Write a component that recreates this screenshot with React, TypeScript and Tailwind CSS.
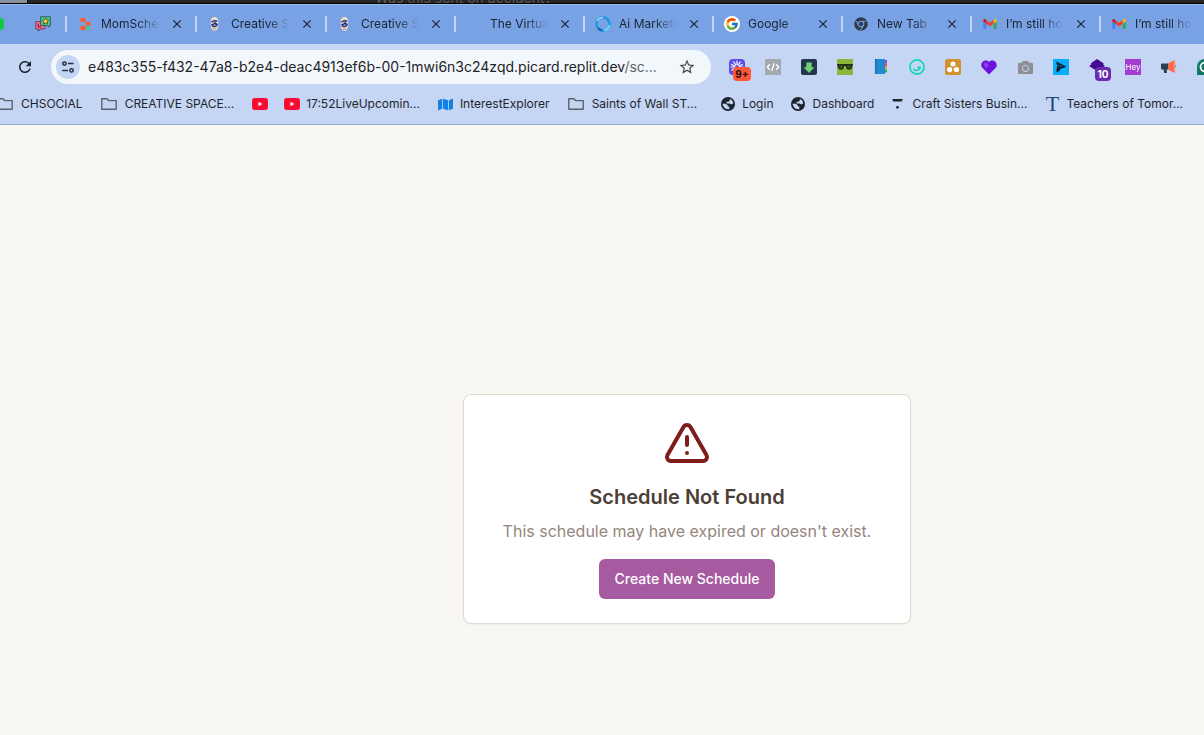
import type { ReactNode } from "react";
import { AlertTriangle } from "lucide-react";
import { FcGoogle } from "react-icons/fc";
import { FaCamera, FaChrome, FaMap } from "react-icons/fa";
import { MdClose, MdRefresh, MdStarBorder } from "react-icons/md";

function PinnedChatIcon() {
  return (
    <svg viewBox="0 0 16 16" className="size-4" aria-hidden="true">
      <path d="M.8 5.600h9v7.400H5L3.200 15.200V13H.8z" fill="#ff6b95" stroke="#5a3350" strokeWidth=".8" />
      <path d="M3.300 7.500v3.300h3" fill="none" stroke="#7c2148" strokeWidth="1.200" />
      <path d="M5.600.8h9.800v8.600h-1.200v1.800L12 9.400H5.600z" fill="#4fc98a" stroke="#26454a" strokeWidth=".8" />
      <path d="M10.500 2l1.100 1.900 2 .4-1.400 1.500.3 2.100-2-.9-2 .9.300-2.100-1.400-1.500 2-.4z" fill="#ffd52e" stroke="#33503a" strokeWidth=".8" />
    </svg>
  );
}

function ReplitIcon() {
  return (
    <svg viewBox="0 0 16 16" className="size-4" aria-hidden="true">
      <rect x="3.500" y="2" width="5" height="4" rx=".8" fill="#ff5a2b" />
      <rect x="8.500" y="6" width="5" height="3.600" rx=".8" fill="#ff5a2b" />
      <rect x="3.500" y="10" width="5" height="4" rx=".8" fill="#ff5a2b" />
      <circle cx="10.800" cy="11.800" r="1.900" fill="#37cf7a" />
    </svg>
  );
}

function MascotIcon() {
  return (
    <svg viewBox="0 0 16 16" className="size-4" aria-hidden="true">
      <ellipse cx="7.500" cy="8" rx="3.900" ry="7" fill="#e6d5d0" />
      <path d="M4 4.500Q7.500-1 11 4.300" fill="none" stroke="#f3dfc6" strokeWidth="1.400" />
      <path d="M4.600 6.200Q7 3.800 10.200 5.200M5 8.800Q8.500 6.800 10.200 8.400Q9.500 11 6 10.300z" fill="none" stroke="#20327d" strokeWidth="1.500" />
      <circle cx="8" cy="7" r="1" fill="#20327d" />
      <path d="M6 13h3" stroke="#c99484" strokeWidth="1" />
    </svg>
  );
}

function RingIcon() {
  return (
    <svg viewBox="0 0 16 16" className="size-4" fill="none" aria-hidden="true">
      <circle cx="8" cy="8" r="6.600" stroke="#2597e2" strokeWidth="2.600" />
      <path d="M2.200 5A6.500 6.500 0 0 1 8 1.500" stroke="#a5dcf5" strokeWidth="1.600" />
      <path d="M14.400 9A6.500 6.500 0 0 1 9 14.400" stroke="#64d6f2" strokeWidth="2.200" />
      <path d="M3 12.200A6.500 6.500 0 0 0 7 14.400" stroke="#1666b8" strokeWidth="2.200" />
    </svg>
  );
}

function GoogleIcon() {
  return (
    <span className="flex size-4 items-center justify-center rounded-full bg-white">
      <FcGoogle className="size-3.5" />
    </span>
  );
}

function GmailIcon() {
  return (
    <svg viewBox="52 42 88 66" className="h-3 w-4 p-px" aria-hidden="true">
      <path fill="#4285f4" d="M58 108h14V74L52 59v43c0 3.320 2.690 6 6 6" />
      <path fill="#34a853" d="M120 108h14c3.320 0 6-2.690 6-6V59l-20 15" />
      <path fill="#fbbc04" d="M120 48v26l20-15v-8c0-7.420-8.470-11.650-14.400-7.200" />
      <path fill="#ea4335" d="M72 74V48l24 18 24-18v26L96 92" />
      <path fill="#c5221f" d="M52 51v8l20 15V48l-5.600-4.200c-5.940-4.450-14.400-.22-14.400 7.200" />
    </svg>
  );
}

type Tab = { title: string; icon: ReactNode; wide?: boolean };

const tabs: Tab[] = [
  { title: "MomSchedule", icon: <ReplitIcon />, wide: true },
  { title: "Creative Space", icon: <MascotIcon />, wide: true },
  { title: "Creative Space", icon: <MascotIcon /> },
  { title: "The Virtual", icon: null },
  { title: "Ai Marketing", icon: <RingIcon /> },
  { title: "Google", icon: <GoogleIcon /> },
  { title: "New Tab", icon: <FaChrome className="size-3.5 text-[#323b4b]" /> },
  { title: "I’m still hoping", icon: <GmailIcon /> },
  { title: "I’m still hoping", icon: <GmailIcon /> },
];

function TabStrip() {
  return (
    <nav aria-label="Tabs" className="flex h-10 items-center overflow-hidden border-t border-[#9dbcee] bg-[#78a2e4] pb-px">
      <div className="flex w-[65px] shrink-0 items-center justify-between pr-3.5">
        <span className="h-3 w-1 rounded-r-full bg-[#0bca41]" />
        <PinnedChatIcon />
      </div>
      {tabs.map((tab, i) => (
        <div key={i} className={`flex h-4 shrink-0 items-center border-l-2 border-[#c4d6f4] pr-2.5 pl-2.5 ${tab.wide ? "w-[130px]" : "w-[129px]"}`}>
          <span className="flex size-4 shrink-0 items-center justify-center">{tab.icon}</span>
          <a href="#tab" className="mr-2 ml-2 min-w-0 flex-1 overflow-hidden [mask-image:linear-gradient(to_right,black_60%,transparent_98%)] text-xs whitespace-nowrap text-[#1b2230]">
            {tab.title}
          </a>
          <button aria-label={`Close ${tab.title}`} className="flex size-4 shrink-0 items-center justify-center text-[#1b2230]">
            <MdClose className="size-3.5" />
          </button>
        </div>
      ))}
    </nav>
  );
}

function Badge({ className, children }: { className: string; children: ReactNode }) {
  return (
    <span className={`absolute flex h-3.5 items-center justify-center rounded text-[10px] leading-none font-bold ${className}`}>
      {children}
    </span>
  );
}

const svgBox = { viewBox: "0 0 16 16", className: "size-4", "aria-hidden": true } as const;

const extensions: { name: string; icon: ReactNode }[] = [
  {
    name: "Loom",
    icon: (
      <>
        <svg {...svgBox}>
          <rect width="16" height="16" rx="4" fill="#5b4fe8" />
          <path d="M8 8V2M8 8L4.800 3M8 8l3.200-5M8 8L2.600 5.500M8 8l5.400-2.500M8 8H2M8 8h6M8 8l-5 3" stroke="#fff" strokeWidth="1.200" strokeLinecap="round" />
          <circle cx="8" cy="8" r="2" fill="#5b4fe8" />
        </svg>
        <Badge className="top-2 left-1 w-[18px] bg-[#ff5638] text-[#26120e]">9+</Badge>
      </>
    ),
  },
  {
    name: "Source viewer",
    icon: (
      <svg {...svgBox}>
        <rect width="16" height="16" fill="#a5a9af" />
        <path d="M4.800 5.200L2.300 8l2.500 2.800M11.200 5.200L13.700 8l-2.500 2.800M9.200 4.200L6.800 11.800" fill="none" stroke="#fff" strokeWidth="1.300" />
      </svg>
    ),
  },
  {
    name: "Downloader",
    icon: (
      <svg {...svgBox}>
        <rect width="16" height="16" rx="2" fill="#24344a" />
        <path d="M5.300 3.500h5.400v4.700h2.800L8 14 2.500 8.200h2.800z" fill="#6fd071" />
      </svg>
    ),
  },
  {
    name: "Glasses",
    icon: (
      <svg {...svgBox}>
        <rect width="16" height="16" fill="#8ab83c" />
        <path d="M0 5h16v1.200h-.6c-.2 3-1.200 4.600-3.400 4.600-2.200 0-3-1.600-3.300-3.800H7.300C7 9.200 6.200 10.800 4 10.800 1.800 10.800.8 9.200.6 6.200H0z" fill="#222c18" />
        <path d="M2 6.500h4.200c-.1 1.800-.8 2.900-2.100 2.900S2.100 8.300 2 6.500zM9.800 6.500H14c-.1 1.800-.8 2.900-2.100 2.900s-2-1.100-2.100-2.900z" fill="#3f5526" />
      </svg>
    ),
  },
  {
    name: "Notebook",
    icon: (
      <svg {...svgBox}>
        <path d="M2 0h10v15H2z" fill="#208bd5" />
        <path d="M2 0h1.500v15H2z" fill="#176bad" />
        <path d="M1.200 3H3M1.200 5.500H3M1.200 8H3M1.200 10.500H3M1.200 13H3" stroke="#6d9fc8" strokeWidth=".6" />
        <path d="M12 1h2v3.500h-2z" fill="#a646b5" />
        <path d="M12 4.500h2v3h-2z" fill="#e74b3c" />
        <path d="M12 7.500h2v3h-2z" fill="#f39c25" />
        <path d="M12 10.500h2v3h-2z" fill="#29b66c" />
      </svg>
    ),
  },
  {
    name: "Smile",
    icon: (
      <svg {...svgBox} fill="none">
        <circle cx="8" cy="8" r="7.100" stroke="#10d6b4" strokeWidth="1.700" />
        <path d="M4.500 10c1.500 2.300 6 2 7-2.500M8.500 8.200h3" stroke="#10d6b4" strokeWidth="1.500" />
      </svg>
    ),
  },
  {
    name: "Asana",
    icon: (
      <svg {...svgBox}>
        <rect width="16" height="16" rx="2" fill="#cf922f" />
        <circle cx="8" cy="4.900" r="2.500" fill="#fff" />
        <circle cx="4.600" cy="10.600" r="2.600" fill="#fff" />
        <circle cx="11.400" cy="10.600" r="2.600" fill="#fff" />
      </svg>
    ),
  },
  {
    name: "Heart",
    icon: (
      <svg {...svgBox}>
        <path d="M8 15.500L1.300 8.800C-2.200 4.500 3.800-1 8 3c4.200-4 10.200 1.500 6.700 5.800z" fill="#6b12dd" />
        <path d="M2.500 5L4.500 3 8 6.200 4.800 9.200z" fill="#8d42f0" />
      </svg>
    ),
  },
  { name: "Screenshot", icon: <FaCamera className="size-[15px] text-[#8e8f92]" /> },
  {
    name: "Player",
    icon: (
      <svg {...svgBox}>
        <rect width="16" height="16" fill="#06aefb" />
        <path d="M3.500 2.500L13.500 7.800 6.500 10.200V8.600L10 7 3.500 5.500z" fill="#101b2b" />
        <path d="M3.500 9.500L7 7.500v4L3.500 13.500z" fill="#101b2b" />
        <path d="M4 6.200L9 7 4 9z" fill="#101b2b" />
      </svg>
    ),
  },
  {
    name: "Layers",
    icon: (
      <>
        <svg {...svgBox}>
          <path d="M8 0l6.500 4.200V6L16 7 8 12 0 7l2.200-1.500V4z" fill="#430c94" />
        </svg>
        <Badge className="top-2 left-1.5 w-4 bg-[#6a2ab0] text-white">10</Badge>
      </>
    ),
  },
  {
    name: "Hey",
    icon: (
      <span className="flex size-4 items-center justify-center bg-[#a23bd0] text-[8px] leading-none text-white">
        Hey
      </span>
    ),
  },
  {
    name: "Megaphone",
    icon: (
      <svg {...svgBox}>
        <path d="M0 5.500Q0 4.500 1 4.500h6v6H5.800V14H3.200l-.7-3.500H1Q0 10.500 0 9.500z" fill="#2b3e52" />
        <path d="M7 4.500L13.500 1v13L7 10.500z" fill="#fc6a48" />
        <path d="M13.800 1v13" stroke="#ff9b7d" strokeWidth="1" />
        <path d="M14.500 5.800q1.500 1.500 0 3z" fill="#2b3e52" />
      </svg>
    ),
  },
  {
    name: "Grammarly",
    icon: (
      <svg {...svgBox}>
        <path d="M8 0h8v16H0V8a8 8 0 0 1 8-8z" fill="#0d7962" />
        <circle cx="8" cy="8" r="4.500" fill="none" stroke="#fff" strokeWidth="1.800" />
      </svg>
    ),
  },
];

function Toolbar() {
  return (
    <div className="flex items-center overflow-hidden pt-1.5">
      <button aria-label="Reload" className="mr-[18px] ml-4 flex size-[17px] shrink-0 items-center justify-center text-[#1b2230]">
        <MdRefresh className="size-[18px] shrink-0" />
      </button>
      <div className="flex h-[34px] w-[660px] shrink-0 items-center rounded-full bg-[#f2f7fb] pr-[15px] pl-[5px]">
        <button aria-label="View site information" className="flex size-6 shrink-0 items-center justify-center rounded-full bg-[#c4d6f4] text-[#27303f]">
          <svg viewBox="0 0 16 16" className="size-4" fill="none" stroke="currentColor" strokeWidth="1.500" aria-hidden="true">
            <circle cx="4.500" cy="4.600" r="1.700" />
            <path d="M8 4.600h5.500M2.200 11.400H8" />
            <circle cx="11.500" cy="11.400" r="1.700" />
          </svg>
        </button>
        <a href="#address" className="ml-2 flex-1 text-sm whitespace-nowrap text-[#1f2328]">
          e483c355-f432-47a8-b2e4-deac4913ef6b-00-1mwi6n3c24zqd.picard.replit.dev<span className="text-[#5d6369]">/sc...</span>
        </a>
        <button aria-label="Bookmark this page" className="shrink-0 text-[#454a52]">
          <MdStarBorder className="size-[18px]" />
        </button>
      </div>
      <div className="ml-[18px] flex shrink-0 items-center gap-5">
        {extensions.map((ext) => (
          <button key={ext.name} aria-label={ext.name} className="relative flex size-4 shrink-0 items-center justify-center">
            {ext.icon}
          </button>
        ))}
      </div>
    </div>
  );
}

function FolderIcon() {
  return (
    <svg viewBox="0 0 16 14" className="h-3.5 w-4 shrink-0" fill="none" stroke="#5c6067" strokeWidth="1.400" strokeLinejoin="round" aria-hidden="true">
      <path d="M.8 1.800h5L7.600 3.600h7.600v8.600H.8z" />
    </svg>
  );
}

function YouTubeIcon() {
  return (
    <svg viewBox="0 0 16 12" className="h-3 w-4 shrink-0" aria-hidden="true">
      <rect width="16" height="12" rx="3" fill="#ff0a33" />
      <path d="M6.500 3.700L10.500 6l-4 2.300z" fill="#fff" />
    </svg>
  );
}

function GlobeIcon() {
  return (
    <svg viewBox="0 0 14 14" className="size-3.5 shrink-0" aria-hidden="true">
      <circle cx="7" cy="7" r="7" fill="#1d222b" />
      <path d="M1.500 6.800h3.300L6.800 8.300v1.300h1.500V12.300Q2.600 12.500 1.500 6.800zM8.800 1.700Q11.800 2.800 12.400 6.200L10.400 7.400 8.600 6.600H5.600V4.800H7.400l1.400-1.300z" fill="#c4d6f4" />
    </svg>
  );
}

function MarkIcon() {
  return (
    <svg viewBox="0 0 11 12" className="h-3 w-[11px] shrink-0" fill="#1d222b" aria-hidden="true">
      <path d="M.3 1h10.400L9.800 3.400H1.200z" />
      <circle cx="5.500" cy="9.300" r="1.400" />
    </svg>
  );
}

function BookmarkLink({ icon, label, name, gap = "gap-[7px]" }: { icon: ReactNode; label?: string; name?: string; gap?: string }) {
  return (
    <a href="#bookmark" aria-label={name} className={`flex shrink-0 items-center ${gap}`}>
      {icon}
      {label}
    </a>
  );
}

function BookmarksBar() {
  return (
    <nav aria-label="Bookmarks" className="-ml-[3px] flex h-10 items-center gap-[18px] overflow-hidden text-xs whitespace-nowrap text-[#1f2530]">
      <BookmarkLink gap="gap-2" icon={<FolderIcon />} label="CHSOCIAL" />
      <BookmarkLink gap="gap-2" icon={<FolderIcon />} label="CREATIVE SPACE..." />
      <div className="flex items-center gap-4">
        <BookmarkLink icon={<YouTubeIcon />} name="YouTube" />
        <BookmarkLink gap="gap-1.5" icon={<YouTubeIcon />} label="17:52LiveUpcomin..." />
      </div>
      <BookmarkLink gap="gap-[7px]" icon={<FaMap className="size-[15px] shrink-0 text-[#1380e6]" />} label="InterestExplorer" />
      <BookmarkLink gap="gap-2" icon={<FolderIcon />} label="Saints of Wall ST..." />
      <div className="ml-1.5 flex items-center gap-[18px]">
        <BookmarkLink icon={<GlobeIcon />} label="Login" />
        <BookmarkLink icon={<GlobeIcon />} label="Dashboard" />
      </div>
      <BookmarkLink gap="gap-[9px]" icon={<MarkIcon />} label="Craft Sisters Busin..." />
      <BookmarkLink icon={<span className="w-3.5 text-center font-['Liberation_Serif',serif] text-[22px] leading-none text-[#28467f]">T</span>} label="Teachers of Tomor..." />
    </nav>
  );
}

export default function App() {
  return (
    <div className="flex min-h-screen flex-col overflow-hidden bg-[#f8f7f4] font-['Inter',sans-serif]">
      <div className="flex h-1 items-end overflow-hidden border-b border-black bg-[#242424]">
        <span className="h-1 w-7 shrink-0 border-r border-black bg-[#8a8f9c]" />
        <span className="ml-[347px] text-sm leading-[11px] whitespace-nowrap text-[#5a5a5a]">Was this sent on accident?</span>
      </div>
      <header className="border-b border-[#97a6c6] bg-[#c4d6f4]">
        <TabStrip />
        <Toolbar />
        <BookmarksBar />
      </header>
      <main className="flex flex-1 items-center justify-center pt-[158px] pl-[170px]">
        <section className="flex w-full max-w-md flex-col items-center rounded-lg border border-[#ddd9ce] bg-white p-6 text-center shadow-xs">
          <AlertTriangle className="mb-4 size-12 text-[#7f1d1d]" aria-hidden="true" />
          <h1 className="mb-2 text-xl leading-7 font-semibold text-[#4c4036]">Schedule Not Found</h1>
          <p className="mb-4 text-base text-[#95857c]">This schedule may have expired or doesn't exist.</p>
          <button className="h-10 rounded-md bg-[#a65a9f] px-4 text-sm font-medium text-white">Create New Schedule</button>
        </section>
      </main>
    </div>
  );
}
